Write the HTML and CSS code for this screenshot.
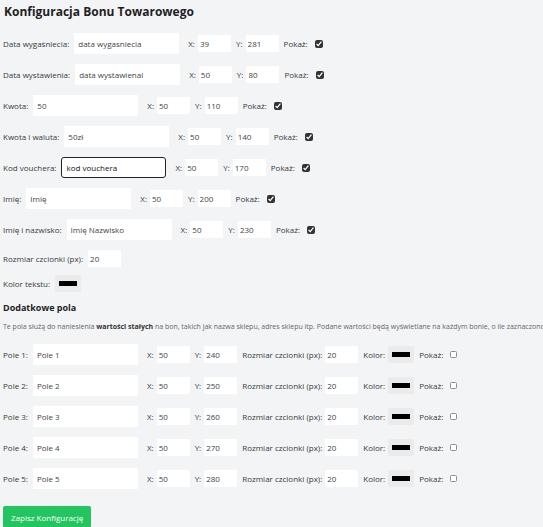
FILE: index.html
```html
<!DOCTYPE html>
<html lang="pl">
<head>
<meta charset="utf-8">
<title>Konfiguracja Bonu Towarowego</title>
<link rel="stylesheet" href="styles.css">
</head>
<body>
<div class="page">
  <h1 class="title">Konfiguracja Bonu Towarowego</h1>

  <div class="row">
    <label class="lbl">Data wygaśniecia:</label>
    <input class="txt" type="text" value="data wygasniecia">
    <label class="sub">X:</label><input class="num" type="text" value="39">
    <label class="sub">Y:</label><input class="num" type="text" value="281">
    <label class="sub">Pokaż:</label><input class="chk" type="checkbox" checked>
  </div>
  <div class="row">
    <label class="lbl">Data wystawienia:</label>
    <input class="txt" type="text" value="data wystawienai">
    <label class="sub">X:</label><input class="num" type="text" value="50">
    <label class="sub">Y:</label><input class="num" type="text" value="80">
    <label class="sub">Pokaż:</label><input class="chk" type="checkbox" checked>
  </div>
  <div class="row">
    <label class="lbl">Kwota:</label>
    <input class="txt" type="text" value="50">
    <label class="sub">X:</label><input class="num" type="text" value="50">
    <label class="sub">Y:</label><input class="num" type="text" value="110">
    <label class="sub">Pokaż:</label><input class="chk" type="checkbox" checked>
  </div>
  <div class="row">
    <label class="lbl">Kwota i waluta:</label>
    <input class="txt" type="text" value="50zł">
    <label class="sub">X:</label><input class="num" type="text" value="50">
    <label class="sub">Y:</label><input class="num" type="text" value="140">
    <label class="sub">Pokaż:</label><input class="chk" type="checkbox" checked>
  </div>
  <div class="row">
    <label class="lbl">Kod vouchera:</label>
    <input class="txt focused" type="text" value="kod vouchera">
    <label class="sub">X:</label><input class="num" type="text" value="50">
    <label class="sub">Y:</label><input class="num" type="text" value="170">
    <label class="sub">Pokaż:</label><input class="chk" type="checkbox" checked>
  </div>
  <div class="row">
    <label class="lbl">Imię:</label>
    <input class="txt" type="text" value="Imię">
    <label class="sub">X:</label><input class="num" type="text" value="50">
    <label class="sub">Y:</label><input class="num" type="text" value="200">
    <label class="sub">Pokaż:</label><input class="chk" type="checkbox" checked>
  </div>
  <div class="row">
    <label class="lbl">Imię i nazwisko:</label>
    <input class="txt" type="text" value="Imię Nazwisko">
    <label class="sub">X:</label><input class="num" type="text" value="50">
    <label class="sub">Y:</label><input class="num" type="text" value="230">
    <label class="sub">Pokaż:</label><input class="chk" type="checkbox" checked>
  </div>

  <div class="row small font-row">
    <label class="lbl">Rozmiar czcionki (px):</label>
    <input class="num" type="text" value="20">
  </div>
  <div class="row small color-row">
    <label class="lbl">Kolor tekstu:</label>
    <span class="color"><span class="swatch"></span></span>
  </div>

  <h2 class="section">Dodatkowe pola</h2>
  <p class="desc">Te pola służą do naniesienia <b>wartości stałych</b> na bon, takich jak nazwa sklepu, adres sklepu itp. Podane wartości będą wyświetlane na każdym bonie, o ile zaznaczono</p>

  <div class="row">
    <label class="lbl">Pole 1:</label>
    <input class="txt" type="text" value="Pole 1">
    <label class="sub">X:</label><input class="num" type="text" value="50">
    <label class="sub">Y:</label><input class="num" type="text" value="240">
    <label class="sub">Rozmiar czcionki (px):</label><input class="num" type="text" value="20">
    <label class="sub">Kolor:</label><span class="color"><span class="swatch"></span></span>
    <label class="sub">Pokaż:</label><input class="chk" type="checkbox">
  </div>
  <div class="row">
    <label class="lbl">Pole 2:</label>
    <input class="txt" type="text" value="Pole 2">
    <label class="sub">X:</label><input class="num" type="text" value="50">
    <label class="sub">Y:</label><input class="num" type="text" value="250">
    <label class="sub">Rozmiar czcionki (px):</label><input class="num" type="text" value="20">
    <label class="sub">Kolor:</label><span class="color"><span class="swatch"></span></span>
    <label class="sub">Pokaż:</label><input class="chk" type="checkbox">
  </div>
  <div class="row">
    <label class="lbl">Pole 3:</label>
    <input class="txt" type="text" value="Pole 3">
    <label class="sub">X:</label><input class="num" type="text" value="50">
    <label class="sub">Y:</label><input class="num" type="text" value="260">
    <label class="sub">Rozmiar czcionki (px):</label><input class="num" type="text" value="20">
    <label class="sub">Kolor:</label><span class="color"><span class="swatch"></span></span>
    <label class="sub">Pokaż:</label><input class="chk" type="checkbox">
  </div>
  <div class="row">
    <label class="lbl">Pole 4:</label>
    <input class="txt" type="text" value="Pole 4">
    <label class="sub">X:</label><input class="num" type="text" value="50">
    <label class="sub">Y:</label><input class="num" type="text" value="270">
    <label class="sub">Rozmiar czcionki (px):</label><input class="num" type="text" value="20">
    <label class="sub">Kolor:</label><span class="color"><span class="swatch"></span></span>
    <label class="sub">Pokaż:</label><input class="chk" type="checkbox">
  </div>
  <div class="row">
    <label class="lbl">Pole 5:</label>
    <input class="txt" type="text" value="Pole 5">
    <label class="sub">X:</label><input class="num" type="text" value="50">
    <label class="sub">Y:</label><input class="num" type="text" value="280">
    <label class="sub">Rozmiar czcionki (px):</label><input class="num" type="text" value="20">
    <label class="sub">Kolor:</label><span class="color"><span class="swatch"></span></span>
    <label class="sub">Pokaż:</label><input class="chk" type="checkbox">
  </div>

  <button class="save" type="button">Zapisz Konfigurację</button>
</div>
</body>
</html>
```
FILE: styles.css
```css
html, body {
  margin: 0;
  padding: 0;
  background: #f3f4f6;
  overflow: hidden;
}
.page {
  padding: 3px 3px 0 3px;
  font-family: "Open Sans", "Noto Sans", sans-serif;
  font-size: 8px;
  color: #3a3a3a;
}
.title {
  margin: 0 0 12px 1px;
  font-size: 12px;
  font-weight: 700;
  color: #1f1f1f;
  line-height: 18px;
}
.row {
  display: flex;
  align-items: center;
  height: 21px;
  margin-bottom: 10px;
  white-space: nowrap;
}
.lbl {
  margin-right: 5px;
}
.sub {
  margin-right: 3px;
}
input {
  font-family: inherit;
  font-size: 8px;
  color: #444;
  border: none;
  outline: none;
  background: #fff;
  box-sizing: border-box;
}
.txt {
  width: 105px;
  height: 21px;
  padding: 0 4px;
  margin-right: 9px;
  border-radius: 1px;
}
.txt.focused {
  border: 1px solid #222;
  border-radius: 3px;
  color: #111;
}
.num {
  width: 33px;
  height: 17px;
  padding: 0 2px;
  margin-right: 5px;
  border-radius: 1px;
}
.chk {
  width: 8px;
  height: 8px;
  margin: 0 0 0 4px;
  accent-color: #333;
}
.chk:not(:checked) {
  appearance: none;
  -webkit-appearance: none;
  width: 7px;
  height: 7px;
  border: 1px solid #8d8d8d;
  border-radius: 1.5px;
  background: #fff;
}
.color {
  display: inline-flex;
  align-items: center;
  justify-content: center;
  width: 26px;
  height: 17px;
  background: #ebebeb;
  border-radius: 2px;
  margin-right: 5px;
}
.swatch {
  width: 18px;
  height: 5px;
  background: #000;
}
.small {
  height: 17px;
}
.font-row {
  margin-bottom: 8px;
}
.color-row {
  margin-bottom: 9px;
}
.section {
  margin: 0;
  font-size: 9px;
  font-weight: 700;
  color: #1f1f1f;
  line-height: 14px;
}
.desc {
  margin: 7px 0 12px 0;
  font-size: 7px;
  color: #666;
  white-space: nowrap;
  line-height: 10px;
}
.desc b {
  color: #333;
}
.save {
  margin-top: 7px;
  font-family: inherit;
  font-size: 8px;
  color: #fff;
  background: #22c55e;
  border: none;
  border-radius: 2px;
  height: 22px;
  padding: 0 8px;
}
```
